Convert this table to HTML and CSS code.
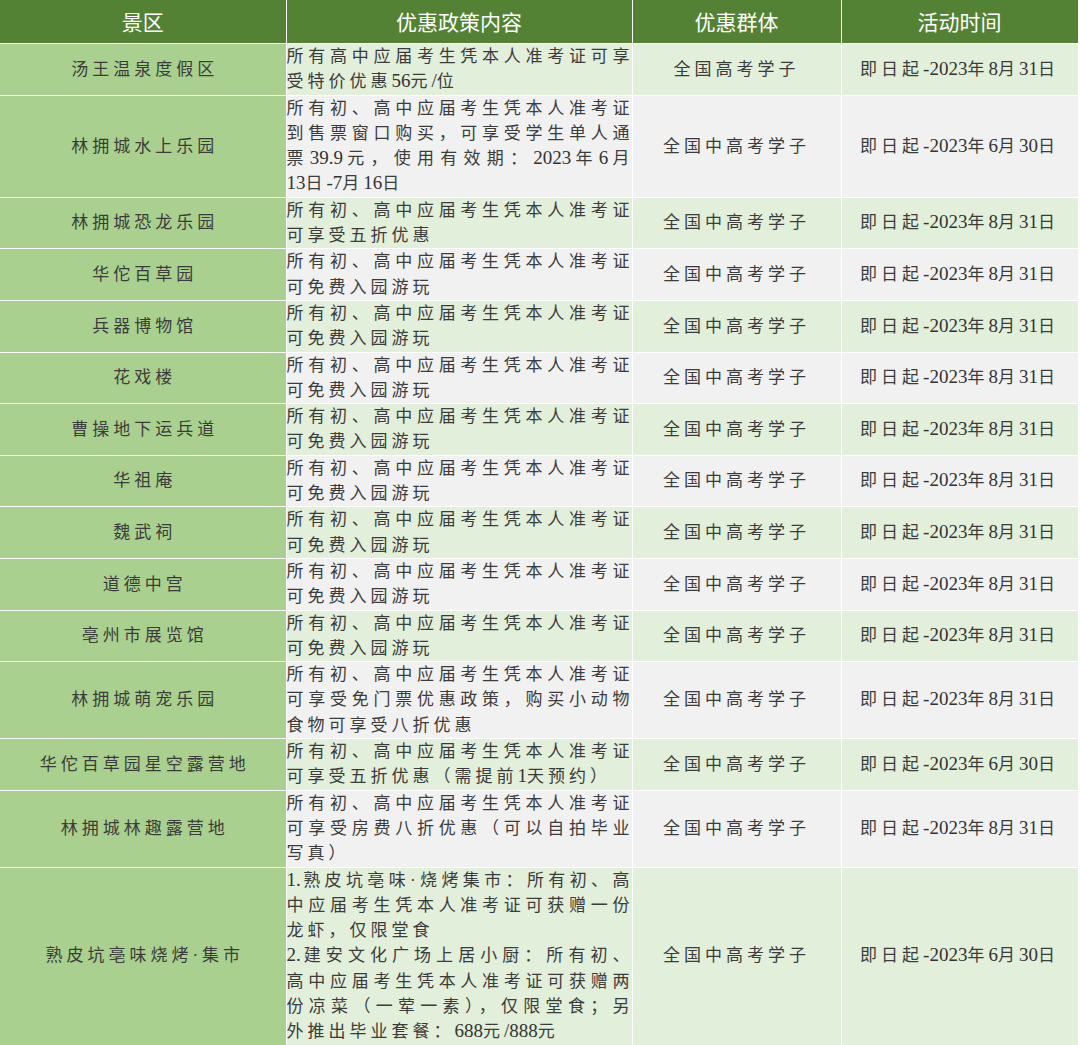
FILE: index.html
```html
<!DOCTYPE html>
<html lang="zh-CN">
<head>
<meta charset="utf-8">
<title>景区优惠政策</title>
<link rel="stylesheet" href="styles.css">
</head>
<body>
<table class="tbl">
  <colgroup>
    <col class="c1"><col class="c2"><col class="c3"><col class="c4">
  </colgroup>
  <thead>
    <tr><th>景区</th><th>优惠政策内容</th><th>优惠群体</th><th>活动时间</th></tr>
  </thead>
  <tbody>
    <tr class="odd">
      <td class="name">汤王温泉度假区</td>
      <td class="desc"><span class="full">所有高中应届考生凭本人准考证可享</span><span>受特价优惠<span class="n">56</span>元<span class="n">/</span>位</span></td>
      <td class="grp">全国高考学子</td>
      <td class="time">即日起<span class="n">-2023</span>年<span class="n">8</span>月<span class="n">31</span>日</td>
    </tr>
    <tr class="even">
      <td class="name">林拥城水上乐园</td>
      <td class="desc"><span class="full">所有初、高中应届考生凭本人准考证</span><span class="full">到售票窗口购买，可享受学生单人通</span><span class="full">票<span class="n">39.9</span>元，使用有效期：<span class="n">2023</span>年<span class="n">6</span>月</span><span><span class="n">13</span>日<span class="n">-7</span>月<span class="n">16</span>日</span></td>
      <td class="grp">全国中高考学子</td>
      <td class="time">即日起<span class="n">-2023</span>年<span class="n">6</span>月<span class="n">30</span>日</td>
    </tr>
    <tr class="odd">
      <td class="name">林拥城恐龙乐园</td>
      <td class="desc"><span class="full">所有初、高中应届考生凭本人准考证</span><span>可享受五折优惠</span></td>
      <td class="grp">全国中高考学子</td>
      <td class="time">即日起<span class="n">-2023</span>年<span class="n">8</span>月<span class="n">31</span>日</td>
    </tr>
    <tr class="even">
      <td class="name">华佗百草园</td>
      <td class="desc"><span class="full">所有初、高中应届考生凭本人准考证</span><span>可免费入园游玩</span></td>
      <td class="grp">全国中高考学子</td>
      <td class="time">即日起<span class="n">-2023</span>年<span class="n">8</span>月<span class="n">31</span>日</td>
    </tr>
    <tr class="odd">
      <td class="name">兵器博物馆</td>
      <td class="desc"><span class="full">所有初、高中应届考生凭本人准考证</span><span>可免费入园游玩</span></td>
      <td class="grp">全国中高考学子</td>
      <td class="time">即日起<span class="n">-2023</span>年<span class="n">8</span>月<span class="n">31</span>日</td>
    </tr>
    <tr class="even">
      <td class="name">花戏楼</td>
      <td class="desc"><span class="full">所有初、高中应届考生凭本人准考证</span><span>可免费入园游玩</span></td>
      <td class="grp">全国中高考学子</td>
      <td class="time">即日起<span class="n">-2023</span>年<span class="n">8</span>月<span class="n">31</span>日</td>
    </tr>
    <tr class="odd">
      <td class="name">曹操地下运兵道</td>
      <td class="desc"><span class="full">所有初、高中应届考生凭本人准考证</span><span>可免费入园游玩</span></td>
      <td class="grp">全国中高考学子</td>
      <td class="time">即日起<span class="n">-2023</span>年<span class="n">8</span>月<span class="n">31</span>日</td>
    </tr>
    <tr class="even">
      <td class="name">华祖庵</td>
      <td class="desc"><span class="full">所有初、高中应届考生凭本人准考证</span><span>可免费入园游玩</span></td>
      <td class="grp">全国中高考学子</td>
      <td class="time">即日起<span class="n">-2023</span>年<span class="n">8</span>月<span class="n">31</span>日</td>
    </tr>
    <tr class="odd">
      <td class="name">魏武祠</td>
      <td class="desc"><span class="full">所有初、高中应届考生凭本人准考证</span><span>可免费入园游玩</span></td>
      <td class="grp">全国中高考学子</td>
      <td class="time">即日起<span class="n">-2023</span>年<span class="n">8</span>月<span class="n">31</span>日</td>
    </tr>
    <tr class="even">
      <td class="name">道德中宫</td>
      <td class="desc"><span class="full">所有初、高中应届考生凭本人准考证</span><span>可免费入园游玩</span></td>
      <td class="grp">全国中高考学子</td>
      <td class="time">即日起<span class="n">-2023</span>年<span class="n">8</span>月<span class="n">31</span>日</td>
    </tr>
    <tr class="odd">
      <td class="name">亳州市展览馆</td>
      <td class="desc"><span class="full">所有初、高中应届考生凭本人准考证</span><span>可免费入园游玩</span></td>
      <td class="grp">全国中高考学子</td>
      <td class="time">即日起<span class="n">-2023</span>年<span class="n">8</span>月<span class="n">31</span>日</td>
    </tr>
    <tr class="even">
      <td class="name">林拥城萌宠乐园</td>
      <td class="desc"><span class="full">所有初、高中应届考生凭本人准考证</span><span class="full">可享受免门票优惠政策，购买小动物</span><span>食物可享受八折优惠</span></td>
      <td class="grp">全国中高考学子</td>
      <td class="time">即日起<span class="n">-2023</span>年<span class="n">8</span>月<span class="n">31</span>日</td>
    </tr>
    <tr class="odd">
      <td class="name">华佗百草园星空露营地</td>
      <td class="desc"><span class="full">所有初、高中应届考生凭本人准考证</span><span>可享受五折优惠（需提前<span class="n">1</span>天预约）</span></td>
      <td class="grp">全国中高考学子</td>
      <td class="time">即日起<span class="n">-2023</span>年<span class="n">6</span>月<span class="n">30</span>日</td>
    </tr>
    <tr class="even">
      <td class="name">林拥城林趣露营地</td>
      <td class="desc"><span class="full">所有初、高中应届考生凭本人准考证</span><span class="full">可享受房费八折优惠（可以自拍毕业</span><span>写真）</span></td>
      <td class="grp">全国中高考学子</td>
      <td class="time">即日起<span class="n">-2023</span>年<span class="n">8</span>月<span class="n">31</span>日</td>
    </tr>
    <tr class="odd">
      <td class="name">熟皮坑亳味烧烤·集市</td>
      <td class="desc"><span class="full"><span class="n">1.</span>熟皮坑亳味·烧烤集市：所有初、高</span><span class="full">中应届考生凭本人准考证可获赠一份</span><span>龙虾，仅限堂食</span><span class="full"><span class="n">2.</span>建安文化广场上居小厨：所有初、</span><span class="full">高中应届考生凭本人准考证可获赠两</span><span class="full">份凉菜（一荤一素），仅限堂食；另</span><span>外推出毕业套餐：<span class="n">688</span>元<span class="n">/888</span>元</span></td>
      <td class="grp">全国中高考学子</td>
      <td class="time">即日起<span class="n">-2023</span>年<span class="n">6</span>月<span class="n">30</span>日</td>
    </tr>
  </tbody>
</table>
</body>
</html>
```

FILE: styles.css
```css
html, body {
  margin: 0;
  padding: 0;
  background: #ffffff;
}

.tbl {
  border-collapse: collapse;
  table-layout: fixed;
  width: 1078px;
  font-family: "Liberation Serif", "Noto Sans CJK SC", serif;
  color: #3c3c3c;
}

.c1 { width: 286px; }
.c2 { width: 346px; }
.c3 { width: 209px; }
.c4 { width: 237px; }

.tbl th {
  background: #548235;
  color: #ffffff;
  font-family: "Noto Sans CJK SC", sans-serif;
  font-weight: 400;
  font-size: 21px;
  height: 43px;
  line-height: 43px;
  padding: 0;
  border: 1px solid #ffffff;
  border-top: 0;
}

.tbl td {
  font-size: 17px;
  line-height: 25.3px;
  letter-spacing: 4px;
  padding: 0;
  border: 1px solid #ffffff;
  vertical-align: middle;
}

.tbl th:first-child, .tbl td:first-child { border-left: 0; }

.odd td { background: #e2efda; }
.even td { background: #f1f1f1; }
.tbl td.name { background: #a9d08e; text-align: center; padding-left: 4px; }

.desc { padding: 0 2px 0 5px; }
.desc > span { display: block; height: 25.3px; text-align: left; }
.desc > span.full { text-align: justify; text-align-last: justify; letter-spacing: 2px; }

.grp { text-align: center; padding-left: 4px; }
.time { text-align: center; letter-spacing: 3px; padding-left: 3px; }

.n {
  font-family: "Liberation Serif", serif;
  font-size: 19px;
  line-height: 0;
  letter-spacing: 0;
  color: #333333;
}
```
